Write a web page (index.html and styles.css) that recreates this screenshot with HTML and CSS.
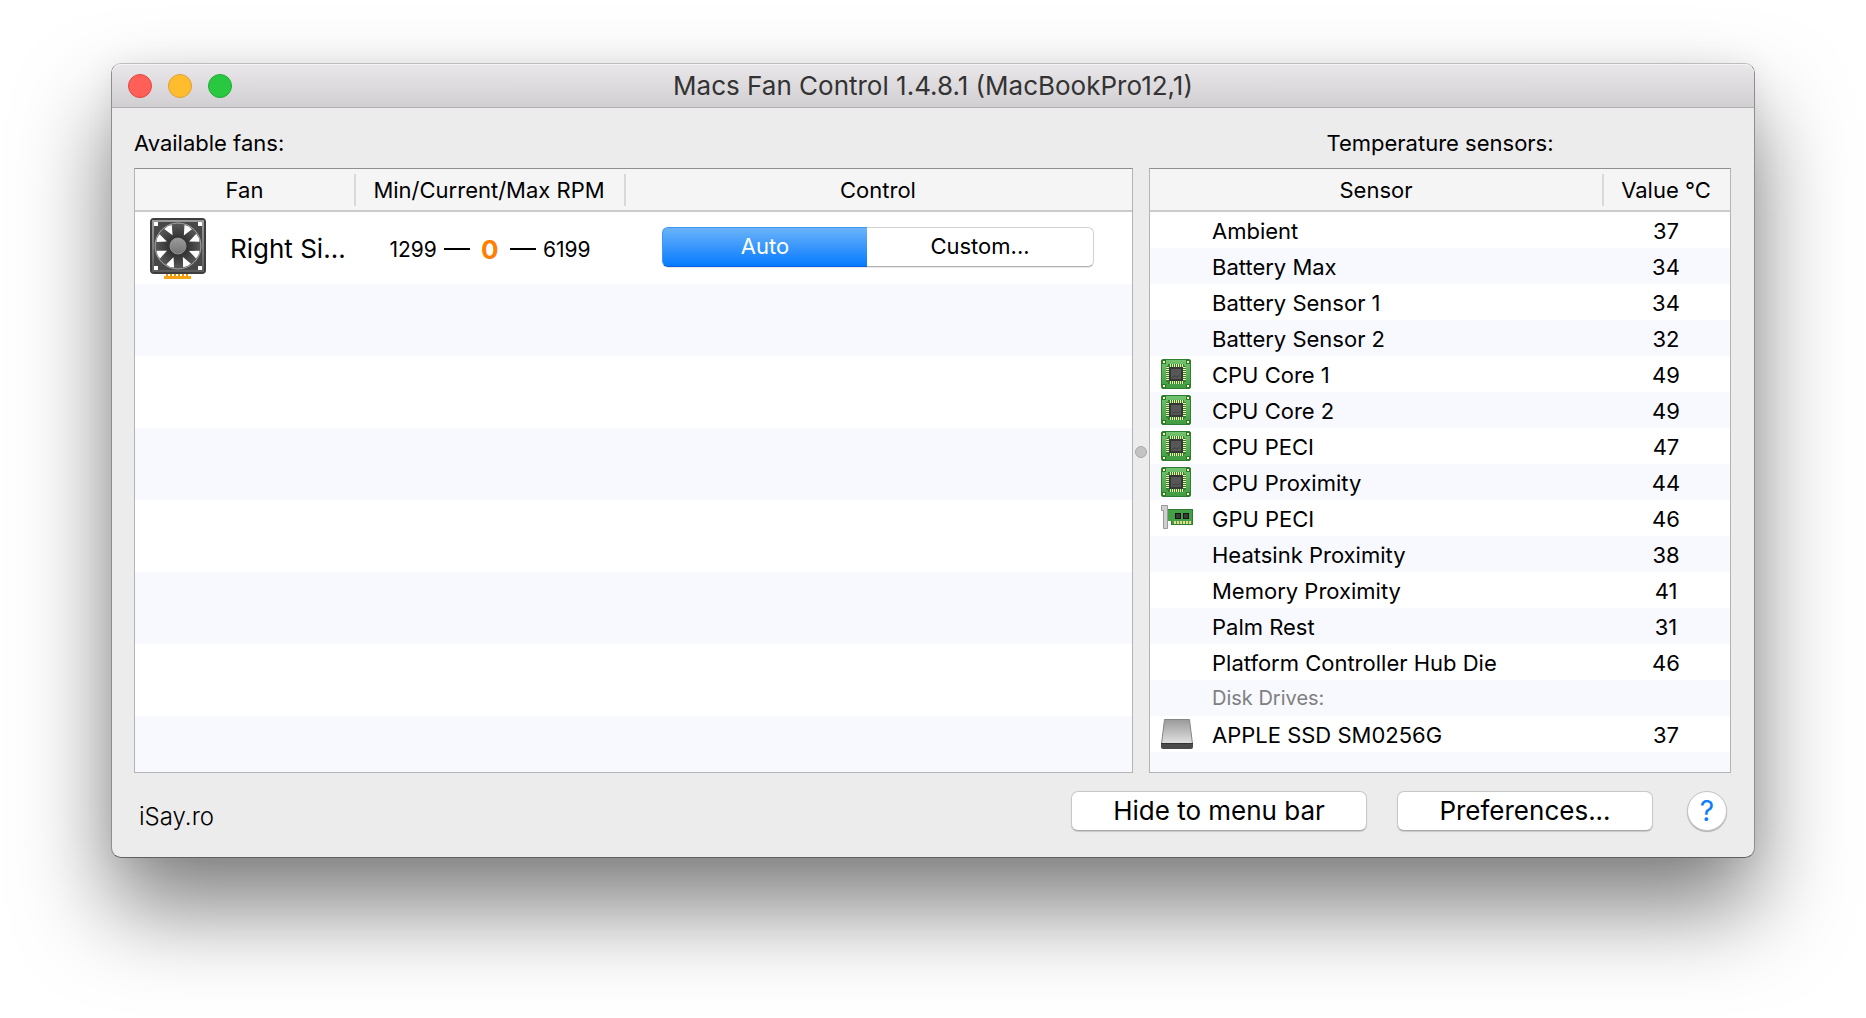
FILE: index.html
```html
<!DOCTYPE html>
<html lang="en">
<head>
<meta charset="utf-8">
<title>Macs Fan Control</title>
<link rel="stylesheet" href="styles.css">
</head>
<body>
<svg class="defs" width="0" height="0" aria-hidden="true">
  <defs>
    <linearGradient id="pcb" x1="0" y1="0" x2="0" y2="1"><stop offset="0" stop-color="#74c370"/><stop offset="1" stop-color="#3f9a40"/></linearGradient>
    <linearGradient id="drive" x1="0" y1="0" x2="0" y2="1"><stop offset="0" stop-color="#9a9a9a"/><stop offset="1" stop-color="#e2e2e2"/></linearGradient>
    <linearGradient id="frame" x1="0" y1="0" x2="0" y2="1"><stop offset="0" stop-color="#9b9b9b"/><stop offset="1" stop-color="#5c5c5c"/></linearGradient>
    <linearGradient id="hub" x1="0" y1="0" x2="0" y2="1"><stop offset="0" stop-color="#9c9c9c"/><stop offset="1" stop-color="#747474"/></linearGradient>
    <radialGradient id="rotor"><stop offset="0.3" stop-color="#2c2c2c"/><stop offset="1" stop-color="#5a5a5a"/></radialGradient>
    <symbol id="chip" viewBox="0 0 30 30">
      <rect x="0.5" y="0.5" width="29" height="29" rx="1.5" fill="url(#pcb)" stroke="#2f7d30"/>
      <path d="M7 5h16v2h2v16h-2v2H7v-2H5V7h2z" fill="#2f8234"/>
      <path d="M9 6.500h14M9 23.500h14" stroke="#f3f2a8" stroke-width="3" stroke-dasharray="1 1"/>
      <path d="M6.500 8v14M23.500 8v14" stroke="#f3f2a8" stroke-width="3" stroke-dasharray="1 1"/>
      <rect x="8" y="8" width="14" height="14" fill="#353535"/>
      <rect x="10" y="10" width="10" height="10" fill="#575757"/>
      <path d="M11 18h2v-1h2v1h2v-1h2" stroke="#444" fill="none"/>
      <g fill="#fbf3b4" stroke="#2c7a2c"><rect x="1.500" y="1.500" width="3" height="3"/><rect x="25.500" y="1.500" width="3" height="3"/><rect x="1.500" y="25.500" width="3" height="3"/><rect x="25.500" y="25.500" width="3" height="3"/></g>
    </symbol>
  </defs>
</svg>

<main class="window">
  <header class="titlebar">
    <div class="lights">
      <button class="light close" aria-label="Close"></button>
      <button class="light minimize" aria-label="Minimize"></button>
      <button class="light zoom" aria-label="Zoom"></button>
    </div>
    <h1 class="title">Macs Fan Control 1.4.8.1 (MacBookPro12,1)</h1>
  </header>

  <div class="panes">
    <section class="pane">
      <h2 class="label" id="fans-label">Available fans:</h2>
      <div class="list fans">
        <table aria-labelledby="fans-label">
          <colgroup><col class="col-fan"><col class="col-rpm"><col></colgroup>
          <thead><tr><th>Fan</th><th>Min/Current/Max RPM</th><th>Control</th></tr></thead>
          <tbody>
            <tr>
              <td>
                <div class="fan-cell">
                  <svg class="fan-icon" viewBox="0 0 56 62" width="56" height="62" aria-hidden="true">
                    <path d="M14 59.500h27" stroke="#f7a412" stroke-width="3"/>
                    <path d="M16 56.500h24" stroke="#e8940c" stroke-width="3" stroke-dasharray="2 2"/>
                    <rect x="1" y="1" width="54" height="54" rx="3" fill="#4e4e4e" stroke="#3d3d3d" stroke-width="2"/>
                    <rect x="3" y="3" width="50" height="50" fill="#484848" stroke="url(#frame)" stroke-width="2"/>
                    <g fill="#fff"><rect x="4" y="4" width="4" height="4"/><rect x="48" y="4" width="4" height="4"/><rect x="4" y="48" width="4" height="4"/><rect x="48" y="48" width="4" height="4"/></g>
                    <circle cx="28" cy="28" r="23" fill="url(#rotor)" stroke="#a8a8a8"/>
                    <g fill="#fff">
                      <path id="gap" d="M28 16L23.500 6.500Q28 5 32 6.500z" transform="rotate(-27 28 28)"/>
                      <use href="#gap" transform="rotate(56 28 28)"/>
                      <use href="#gap" transform="rotate(95 28 28)"/>
                      <use href="#gap" transform="rotate(141 28 28)"/>
                      <use href="#gap" transform="rotate(183 28 28)"/>
                      <use href="#gap" transform="rotate(229 28 28)"/>
                      <use href="#gap" transform="rotate(274 28 28)"/>
                      <use href="#gap" transform="rotate(319 28 28)"/>
                    </g>
                    <circle cx="28" cy="28" r="8" fill="url(#hub)" stroke="#8f8f8f"/>
                  </svg>
                  <span class="fan-name">Right Si...</span>
                </div>
              </td>
              <td><div class="rpm"><span>1299</span><i class="dash"></i><b>0</b><i class="dash"></i><span>6199</span></div></td>
              <td><div class="segmented"><button class="segment selected" aria-pressed="true">Auto</button><button class="segment" aria-pressed="false">Custom...</button></div></td>
            </tr>
          </tbody>
        </table>
      </div>
    </section>

    <div class="splitter" role="separator"><span class="grip"></span></div>

    <section class="pane">
      <h2 class="label centered" id="sensors-label">Temperature sensors:</h2>
      <div class="list sensors">
        <table aria-labelledby="sensors-label">
          <colgroup><col class="col-icon"><col><col class="col-value"></colgroup>
          <thead><tr><th colspan="2">Sensor</th><th>Value °C</th></tr></thead>
          <tbody>
            <tr><td></td><td>Ambient</td><td>37</td></tr>
            <tr><td></td><td>Battery Max</td><td>34</td></tr>
            <tr><td></td><td>Battery Sensor 1</td><td>34</td></tr>
            <tr><td></td><td>Battery Sensor 2</td><td>32</td></tr>
            <tr><td><svg class="icon"><use href="#chip"/></svg></td><td>CPU Core 1</td><td>49</td></tr>
            <tr><td><svg class="icon"><use href="#chip"/></svg></td><td>CPU Core 2</td><td>49</td></tr>
            <tr><td><svg class="icon"><use href="#chip"/></svg></td><td>CPU PECI</td><td>47</td></tr>
            <tr><td><svg class="icon"><use href="#chip"/></svg></td><td>CPU Proximity</td><td>44</td></tr>
            <tr><td><svg class="icon wide" viewBox="0 0 32 30"><path d="M7 6h25v16H10v-4H7z" fill="#44a046"/><path d="M7 6.500h24.500v15H10.500V18" fill="none" stroke="#2f7d30"/><path d="M13 19.500h18" stroke="#e9dc8c" stroke-width="3" stroke-dasharray="2 1"/><rect x="14.500" y="10.500" width="5" height="5" fill="#3a3a3a" stroke="#161616"/><rect x="22.500" y="10.500" width="5" height="5" fill="#3a3a3a" stroke="#161616"/><path d="M0.500 2.500h6v23h-4v-18h-2z" fill="#cfcfcf" stroke="#9a9a9a"/></svg></td><td>GPU PECI</td><td>46</td></tr>
            <tr><td></td><td>Heatsink Proximity</td><td>38</td></tr>
            <tr><td></td><td>Memory Proximity</td><td>41</td></tr>
            <tr><td></td><td>Palm Rest</td><td>31</td></tr>
            <tr><td></td><td>Platform Controller Hub Die</td><td>46</td></tr>
            <tr class="group"><td></td><td>Disk Drives:</td><td></td></tr>
            <tr><td><svg class="icon wide" viewBox="0 0 32 30"><path d="M3.500 0.500h25L31.500 25h-31z" fill="url(#drive)" stroke="#858585"/><path d="M0 24h32v4q0 2-2 2H2q-2 0-2-2z" fill="#4a4a4a"/><path d="M0 24.500h32" stroke="#333"/></svg></td><td>APPLE SSD SM0256G</td><td>37</td></tr>
          </tbody>
        </table>
      </div>
    </section>
  </div>

  <footer class="actions">
    <a class="brand" href="#">iSay.ro</a>
    <button class="push hide">Hide to menu bar</button>
    <button class="push prefs">Preferences...</button>
    <button class="help" aria-label="Help">?</button>
  </footer>
</main>
</body>
</html>
```
FILE: styles.css
```css
* { box-sizing: border-box; }

body {
  margin: 0;
  padding: 63px 111px 159px;
  background: #fff;
  color: #000;
  font-family: Inter, "Liberation Sans", sans-serif;
  font-size: 22px;
}

button { font: inherit; color: inherit; padding: 0; }
.defs { position: absolute; }

.window {
  border: 1px solid #8e8e8e;
  border-top-color: #bdbdbd;
  border-bottom-color: #606060;
  border-radius: 10px;
  background: #ececec;
  box-shadow: 0 50px 90px rgba(0, 0, 0, 0.5), 0 0 30px rgba(0, 0, 0, 0.06);
}

/* Title bar */
.titlebar {
  display: grid;
  grid-template-columns: 1fr auto 1fr;
  align-items: center;
  height: 44px;
  padding: 0 16px;
  border-bottom: 1px solid #b1aeb1;
  border-radius: 9px 9px 0 0;
  background: linear-gradient(#e9e7e9, #d1cfd1);
  box-shadow: inset 0 1px #f5f4f5;
}
.lights { display: flex; gap: 16px; }
.light { width: 24px; height: 24px; border: 1px solid; border-radius: 50%; }
.close { background: #ff5f57; border-color: #e2463f; }
.minimize { background: #ffbd2e; border-color: #dea034; }
.zoom { background: #28c940; border-color: #1fab35; }
.title { margin: 0; font-size: 26px; font-weight: 400; color: #333; }

/* Panes */
.panes {
  display: grid;
  grid-template-columns: 999fr 16px 582fr;
  padding: 16px 23px 0 22px;
}
.label { margin: 0; height: 44px; line-height: 38px; font-size: 22px; font-weight: 400; }
.centered { text-align: center; }
.splitter { display: flex; align-items: center; justify-content: center; padding-top: 7px; }
.grip {
  flex: none;
  width: 12px;
  height: 12px;
  border: 1px solid #a9a9a9;
  border-radius: 50%;
  background: #c3c3c3;
}

/* Lists */
.list {
  height: 605px;
  border: 1px solid #b4b4b4;
  border-top-color: #8f8f8f;
}
.fans { background: repeating-linear-gradient(#fff 0 72px, #f7f9fe 72px 144px) 0 43px; }
.sensors { background: repeating-linear-gradient(#fff 0 36px, #f7f9fe 36px 72px) 0 43px; }
table { width: 100%; table-layout: fixed; border-collapse: separate; border-spacing: 0; }
th, td { padding: 0; }
th {
  height: 43px;
  border-bottom: 2px solid #cbcbcb;
  background: #f5f5f5;
  font-weight: 400;
}
th + th {
  background: linear-gradient(#d9d9d9, #d9d9d9) 0 5px / 2px 32px no-repeat #f5f5f5;
}
.col-fan { width: 219px; }
.col-rpm { width: 270px; }
.fans td { height: 72px; }
.fan-cell { display: flex; align-items: center; gap: 24px; padding: 1px 0 0 15px; }
.fan-icon { flex: none; }
.fan-name { white-space: nowrap; font-size: 26px; }
.rpm { display: flex; align-items: center; justify-content: center; gap: 7px; padding: 2px 0 0 2px; font-size: 21px; }
.rpm b { width: 26px; text-align: center; font-size: 26px; color: #ff8000; }
.dash { width: 26px; height: 2px; background: #000; }

.segmented { display: flex; height: 40px; margin: 0 38px 2px; }
.segment {
  flex: 226;
  padding-bottom: 2px;
  border: 1px solid #d2d2d2;
  border-left: 0;
  border-bottom-color: #b2b2b2;
  border-radius: 0 6px 6px 0;
  background: #fff;
  box-shadow: 0 1px 1px rgba(0, 0, 0, 0.1);
}
.selected {
  flex: 204;
  border: 1px solid #3f97f5;
  border-bottom-color: #0a62e8;
  border-right: 0;
  border-radius: 6px 0 0 6px;
  background: linear-gradient(#6bb3fa, #067aff);
  color: #fff;
}

.col-icon { width: 62px; }
.col-value { width: 128px; }
.sensors td { height: 36px; padding-top: 2px; line-height: 34px; white-space: nowrap; }
.sensors td:first-child { padding: 0 0 0 11px; }
.sensors td:last-child { text-align: center; }
.sensors .group td { padding-top: 0; color: #808080; font-size: 20px; }
.icon { display: block; width: 30px; height: 30px; }
.wide { width: 32px; }

/* Bottom bar */
.actions { display: flex; align-items: center; padding: 17px 27px 26px; }
.brand {
  margin-right: auto;
  padding-top: 12px;
  color: #000;
  text-decoration: none;
  font-size: 24px;
  font-weight: 300;
}
.push {
  height: 40px;
  border: 1px solid #c8c8c8;
  border-bottom-color: #a9a9a9;
  border-radius: 7px;
  background: #fff;
  box-shadow: 0 1px 1px rgba(0, 0, 0, 0.15);
  font-size: 26px;
}
.hide { width: 296px; margin-right: 30px; }
.prefs { width: 256px; margin-right: 34px; }
.help {
  width: 40px;
  height: 40px;
  border: 1px solid #c4c4c4;
  border-radius: 50%;
  background: #fff;
  box-shadow: 0 1px 1px rgba(0, 0, 0, 0.25);
  color: #0a7dff;
  font-size: 28px;
}
```
